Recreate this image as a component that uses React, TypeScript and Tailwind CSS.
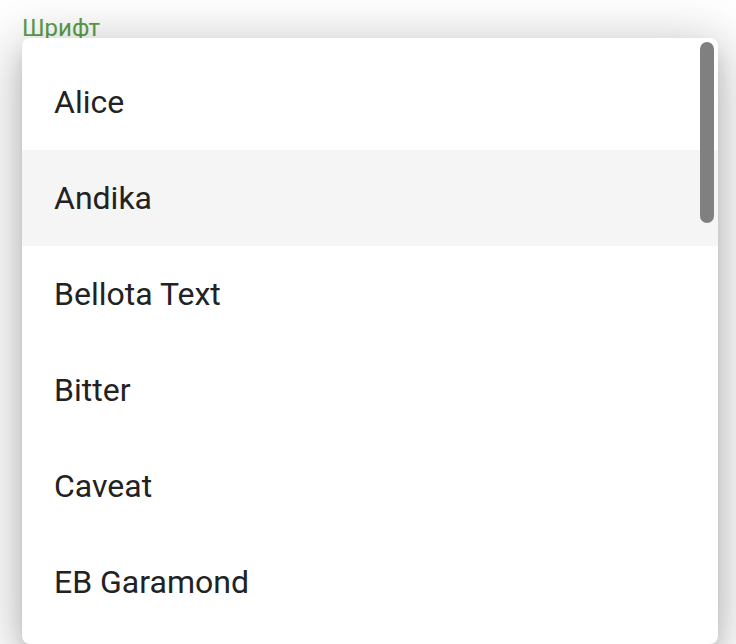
import React from 'react';

const fonts = ['Alice', 'Andika', 'Bellota Text', 'Bitter', 'Caveat', 'EB Garamond'];

const App: React.FC = () => {
  return (
    <div className="relative h-[644px] w-[736px] overflow-hidden bg-white font-['Roboto',sans-serif]">
      <div className="pl-[22px] pt-[14px] text-[24px] leading-[28px] text-[#5c9f45]">Шрифт</div>

      {/* dropdown popover */}
      <div className="absolute left-[22px] top-[38px] h-[606px] w-[696px] overflow-hidden rounded-[8px] bg-white shadow-[0_10px_20px_-6px_rgba(0,0,0,0.2),0_16px_48px_4px_rgba(0,0,0,0.14),0_6px_56px_10px_rgba(0,0,0,0.12)]">
        <ul className="py-[16px]">
          {fonts.map((name, i) => (
            <li
              key={name}
              className={`flex h-[96px] items-center px-[32px] text-[32px] text-[#222222] ${i === 1 ? 'bg-[#f5f5f5]' : ''}`}
            >
              {name}
            </li>
          ))}
        </ul>
        <div className="absolute right-[4px] top-[4px] h-[181px] w-[14px] rounded-full bg-[#808080]" />
      </div>
    </div>
  );
};

export default App;
